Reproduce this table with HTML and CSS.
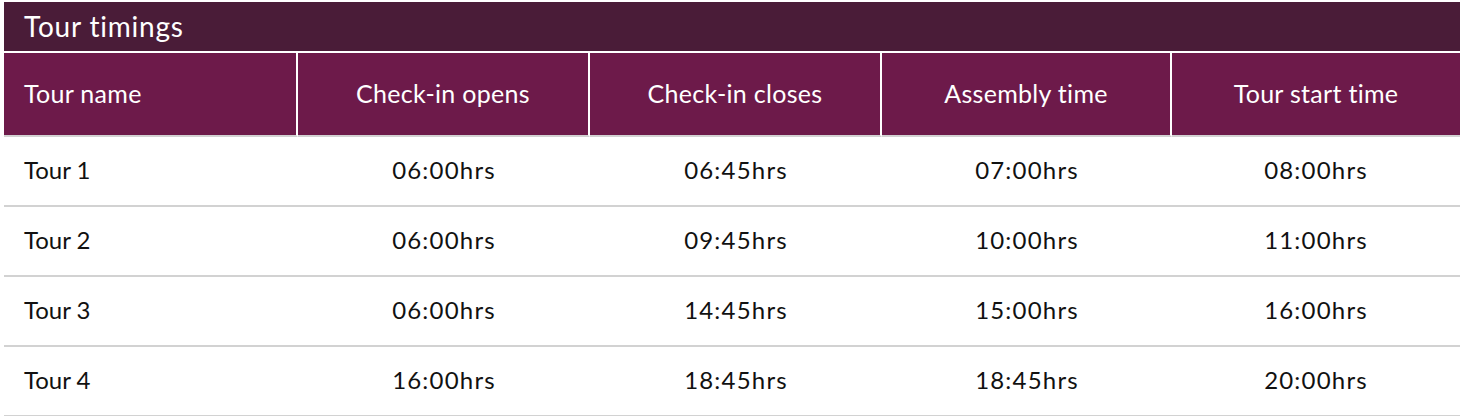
FILE: index.html
```html
<!DOCTYPE html>
<html lang="en">
<head>
<meta charset="utf-8">
<title>Tour timings</title>
<link rel="stylesheet" href="styles.css">
</head>
<body>
<section class="timings">
  <h2 class="timings-title">Tour timings</h2>
  <table class="timings-table">
    <colgroup>
      <col class="w-1">
      <col class="w-2">
      <col class="w-3">
      <col class="w-4">
      <col class="w-5">
    </colgroup>
    <thead>
      <tr>
        <th class="col-name">Tour name</th>
        <th>Check-in opens</th>
        <th>Check-in closes</th>
        <th>Assembly time</th>
        <th>Tour start time</th>
      </tr>
    </thead>
    <tbody>
      <tr><td class="col-name">Tour 1</td><td>06:00hrs</td><td>06:45hrs</td><td>07:00hrs</td><td>08:00hrs</td></tr>
      <tr><td class="col-name">Tour 2</td><td>06:00hrs</td><td>09:45hrs</td><td>10:00hrs</td><td>11:00hrs</td></tr>
      <tr><td class="col-name">Tour 3</td><td>06:00hrs</td><td>14:45hrs</td><td>15:00hrs</td><td>16:00hrs</td></tr>
      <tr><td class="col-name">Tour 4</td><td>16:00hrs</td><td>18:45hrs</td><td>18:45hrs</td><td>20:00hrs</td></tr>
    </tbody>
  </table>
</section>
</body>
</html>
```

FILE: styles.css
```css
html, body {
  margin: 0;
  padding: 0;
  background: #ffffff;
}

body {
  padding: 2px 4px;
  font-family: "Lato", "Open Sans", "Liberation Sans", sans-serif;
  color: #111111;
}

.timings {
  width: 1456px;
}

.timings-title {
  margin: 0 0 2px 0;
  height: 49px;
  box-sizing: border-box;
  padding: 0 20px 1px 20px;
  display: flex;
  align-items: center;
  background: #4a1c38;
  color: #ffffff;
  font-size: 28px;
  font-weight: 400;
  letter-spacing: 0.8px;
}

.timings-table {
  width: 1456px;
  table-layout: fixed;
  border-collapse: separate;
  border-spacing: 0;
}

.w-1 { width: 294px; }
.w-2 { width: 292px; }
.w-3 { width: 292px; }
.w-4 { width: 290px; }
.w-5 { width: 288px; }

.timings-table th {
  height: 84px;
  box-sizing: border-box;
  background: #6d1a4a;
  color: #ffffff;
  font-size: 25px;
  font-weight: 400;
  letter-spacing: 0.3px;
  text-align: center;
  padding: 0 8px 2px 8px;
  border-right: 2px solid #ffffff;
  border-bottom: 2px solid #d2d2d2;
}

.timings-table th:last-child {
  border-right: 0;
}

.timings-table td {
  height: 70px;
  box-sizing: border-box;
  font-size: 24px;
  letter-spacing: 1.2px;
  text-align: center;
  padding: 0 8px 4px 8px;
  border-bottom: 2px solid #d2d2d2;
}

.timings-table .col-name {
  text-align: left;
  padding-left: 20px;
}

.timings-table td.col-name {
  letter-spacing: 0;
}
```
